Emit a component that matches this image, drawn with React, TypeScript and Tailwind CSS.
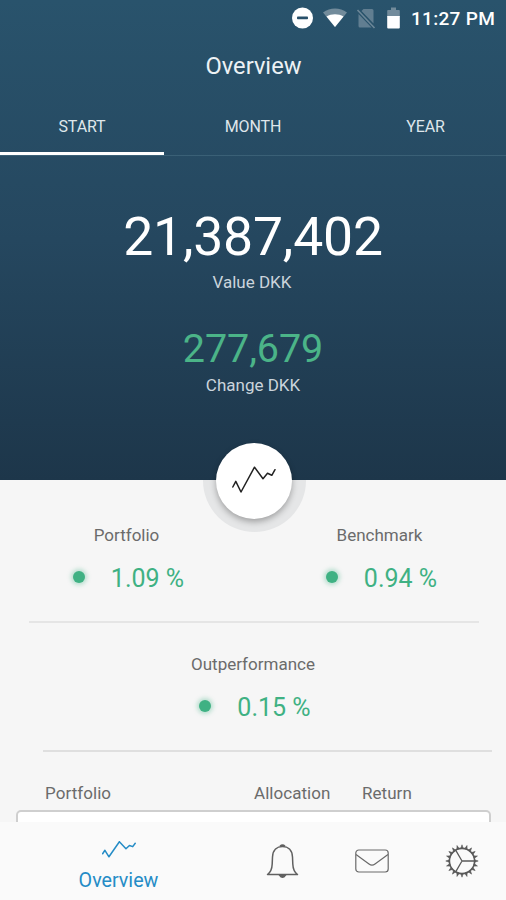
import { clsx } from 'clsx';

const TABS = ['START', 'MONTH', 'YEAR'];
const GEAR_TEETH = Array.from({ length: 20 }, (_, i) => i * 18);

function StatusBar() {
  return (
    <div className="flex h-9 items-center justify-end pr-[11px]">
      <svg className="h-[22px] w-[22px]" viewBox="0 0 22 22">
        <circle cx="11.5" cy="11" r="10.5" fill="#fff" />
        <rect x="6" y="9.6" width="11" height="2.6" rx="0.8" fill="#28506a" />
      </svg>
      <svg className="ml-2.5 h-5 w-6" viewBox="0 0 24 20">
        <path d="M0 4.5C7-.8 17-.8 24 4.5L12 19Z" fill="#728b9b" />
        <path d="M3.5 8.5C8.5 5.5 15.5 5.5 20.5 8.5L12 19Z" fill="#fff" />
      </svg>
      <svg className="ml-[9px] h-[21px] w-5" viewBox="0 0 20 21">
        <path d="M7.5 1H16Q17.5 1 17.5 2.5V15.5L5.5 3ZM2.5 6L15.5 19.5H4Q2.5 19.5 2.5 18Z" fill="#617e91" />
        <path d="M1.5 2L18.5 20" stroke="#6c8798" strokeWidth="1.6" />
      </svg>
      <svg className="ml-[11px] h-[22px] w-[13px]" viewBox="0 0 13 22">
        <path d="M4 .5H9V3H12Q12.8 3 12.8 4V10H.2V4Q.2 3 1 3H4Z" fill="#728b9b" />
        <path d="M.2 9H12.8V20.5Q12.8 21.5 11.8 21.5H1.2Q.2 21.5.2 20.5Z" fill="#fff" />
      </svg>
      <span className="mt-0.5 ml-[11px] w-[84px] text-[19px] font-medium tracking-[0.3px] whitespace-nowrap text-white">
        11:27 PM
      </span>
    </div>
  );
}

function Trend({ className }: { className?: string }) {
  return (
    <svg
      className={className}
      viewBox="0 0 44 28"
      preserveAspectRatio="none"
      fill="none"
      stroke="currentColor"
      strokeWidth="1.5"
      strokeLinejoin="round"
      strokeLinecap="round"
    >
      <path
        d="M.8 21L3.8 15.3L9 26L22.5 1.2L31 12.7L35.5 7.3L39.8 9.3L43 3.7"
        vectorEffect="non-scaling-stroke"
      />
    </svg>
  );
}

function Metric({ label, value, className }: { label: string; value: string; className?: string }) {
  return (
    <div className={clsx('flex flex-col items-center', className)}>
      <span className="h-6 text-[17px] leading-6 text-[#6b6b6b]">{label}</span>
      <div className="mt-[15px] flex h-8 items-center gap-[26px] pl-1">
        <span className="-mt-0.5 h-3 w-3 rounded-full bg-[#3fb183] shadow-[0_0_4px_2px_rgba(63,177,131,0.35)]" />
        <span className="pt-0.5 text-[25px] leading-8 whitespace-nowrap text-[#3fb183]">{value}</span>
      </div>
    </div>
  );
}

function BellIcon() {
  return (
    <svg className="h-[34px] w-[33px]" viewBox="0 0 33 34" fill="none" stroke="#606060" strokeWidth="1.5">
      <path d="M1.5 30.5C5 28 6 25 6.2 20L6.5 13C6.8 6 11 2.5 16.5 2.5S26.2 6 26.5 13L26.8 20C27 25 28 28 31.5 30.5Z" strokeLinejoin="round" />
      <path d="M14 2.2Q16.5-.2 19 2.2M13.5 31Q16.5 35.5 19.5 31Z" fill="#606060" />
    </svg>
  );
}

function MailIcon() {
  return (
    <svg className="h-6 w-[34px]" viewBox="0 0 34 24" fill="none" stroke="#6a6a6a" strokeWidth="1.2">
      <rect x=".8" y="1" width="32.4" height="22" rx="3" />
      <path d="M1 5.5L14 15Q17 17.2 20 15L33 5.5" />
    </svg>
  );
}

function GearIcon() {
  return (
    <svg className="h-[34px] w-[34px]" viewBox="-17 -17 34 34" fill="none" stroke="#5a5a5a" strokeWidth="1.6">
      <circle r="12.6" />
      {GEAR_TEETH.map((deg) => (
        <path key={deg} d="M12.6-1.2L16.2 0L12.6 1.2Z" fill="#5a5a5a" transform={`rotate(${deg})`} strokeWidth="0.6" />
      ))}
      <path d="M0 0H12.4M0 0L-6.2-10.7M0 0L-6.2 10.7" strokeWidth="1.3" />
    </svg>
  );
}

export default function App() {
  return (
    <div className="relative flex h-[900px] w-[506px] flex-col overflow-hidden bg-[#f6f6f6] font-['Roboto',sans-serif]">
      <header className="flex h-[480px] shrink-0 flex-col bg-linear-to-b from-[#29536c] via-[#25475f] to-[#1d364a]">
        <StatusBar />
        <h1 className="mt-[14px] pl-px text-center text-[23.7px] leading-8 text-[#edf2f5]">Overview</h1>
        <nav className="mt-4 flex h-[58px] border-b border-[#3a6076]">
          {TABS.map((tab, i) => (
            <div
              key={tab}
              className={clsx(
                'flex h-[57px] items-center justify-center text-base tracking-[-0.1px] text-[#dfe6eb]',
                i === 0 && 'w-[164px] border-b-3 border-white pt-[3px]',
                i === 1 && 'w-[178px]',
                i === 2 && 'w-[164px] pl-[3px]',
              )}
            >
              {tab}
            </div>
          ))}
        </nav>
        <div className="mt-[49px] text-center text-[53.5px] leading-[64px] tracking-[-0.2px] text-white">21,387,402</div>
        <div className="mt-px pr-0.5 text-center text-[17px] leading-6 text-[#cbd4dc]">Value DKK</div>
        <div className="mt-[31px] text-center text-[39.5px] leading-12 tracking-[-0.1px] text-[#4bb488]">277,679</div>
        <div className="text-center text-[17px] leading-6 text-[#cbd4dc]">Change DKK</div>
      </header>

      <main className="relative h-[342px] shrink-0 overflow-hidden">
        <div className="absolute -top-[51px] left-[203px] h-[103px] w-[103px] rounded-full bg-[#e5e6e7]" />
        <div className="flex pt-[43px]">
          <Metric label="Portfolio" value="1.09 %" className="w-[253px]" />
          <Metric label="Benchmark" value="0.94 %" className="w-[253px]" />
        </div>
        <div className="mt-[27px] mr-[27px] ml-[29px] h-0.5 bg-[#e5e5e5]" />
        <Metric label="Outperformance" value="0.15 %" className="mt-[29px]" />
        <div className="mt-[27px] mr-3.5 ml-[43px] h-0.5 bg-[#dfdfdf]" />
        <div className="mt-[29px] flex text-[17px] leading-6 tracking-[0.05px] text-[#6b6b6b]">
          <span className="ml-[45px] w-[209px]">Portfolio</span>
          <span className="w-[108px]">Allocation</span>
          <span>Return</span>
        </div>
        <div className="mt-[5px] mr-[15px] ml-4 h-8 rounded-[5px] border-2 border-[#cfcfcf] bg-white" />
      </main>

      <div className="absolute top-[443px] left-[216px] flex h-[76px] w-[76px] items-center justify-center rounded-full bg-white pb-0.5 shadow-[0_3px_6px_rgba(0,0,0,0.3)]">
        <Trend className="h-7 w-11 text-[#222]" />
      </div>

      <footer className="flex h-[78px] shrink-0 items-start bg-[#fafafa]">
        <div className="flex w-[237px] flex-col items-center pt-[19px] text-[#258cc6]">
          <Trend className="h-[17px] w-[34px]" />
          <span className="mt-[9px] text-[19.7px] leading-7">Overview</span>
        </div>
        <div className="flex h-[78px] w-[90px] items-center justify-center">
          <BellIcon />
        </div>
        <div className="flex h-[78px] w-[90px] items-center justify-center">
          <MailIcon />
        </div>
        <div className="flex h-[78px] w-[89px] items-center justify-center">
          <GearIcon />
        </div>
      </footer>
    </div>
  );
}
